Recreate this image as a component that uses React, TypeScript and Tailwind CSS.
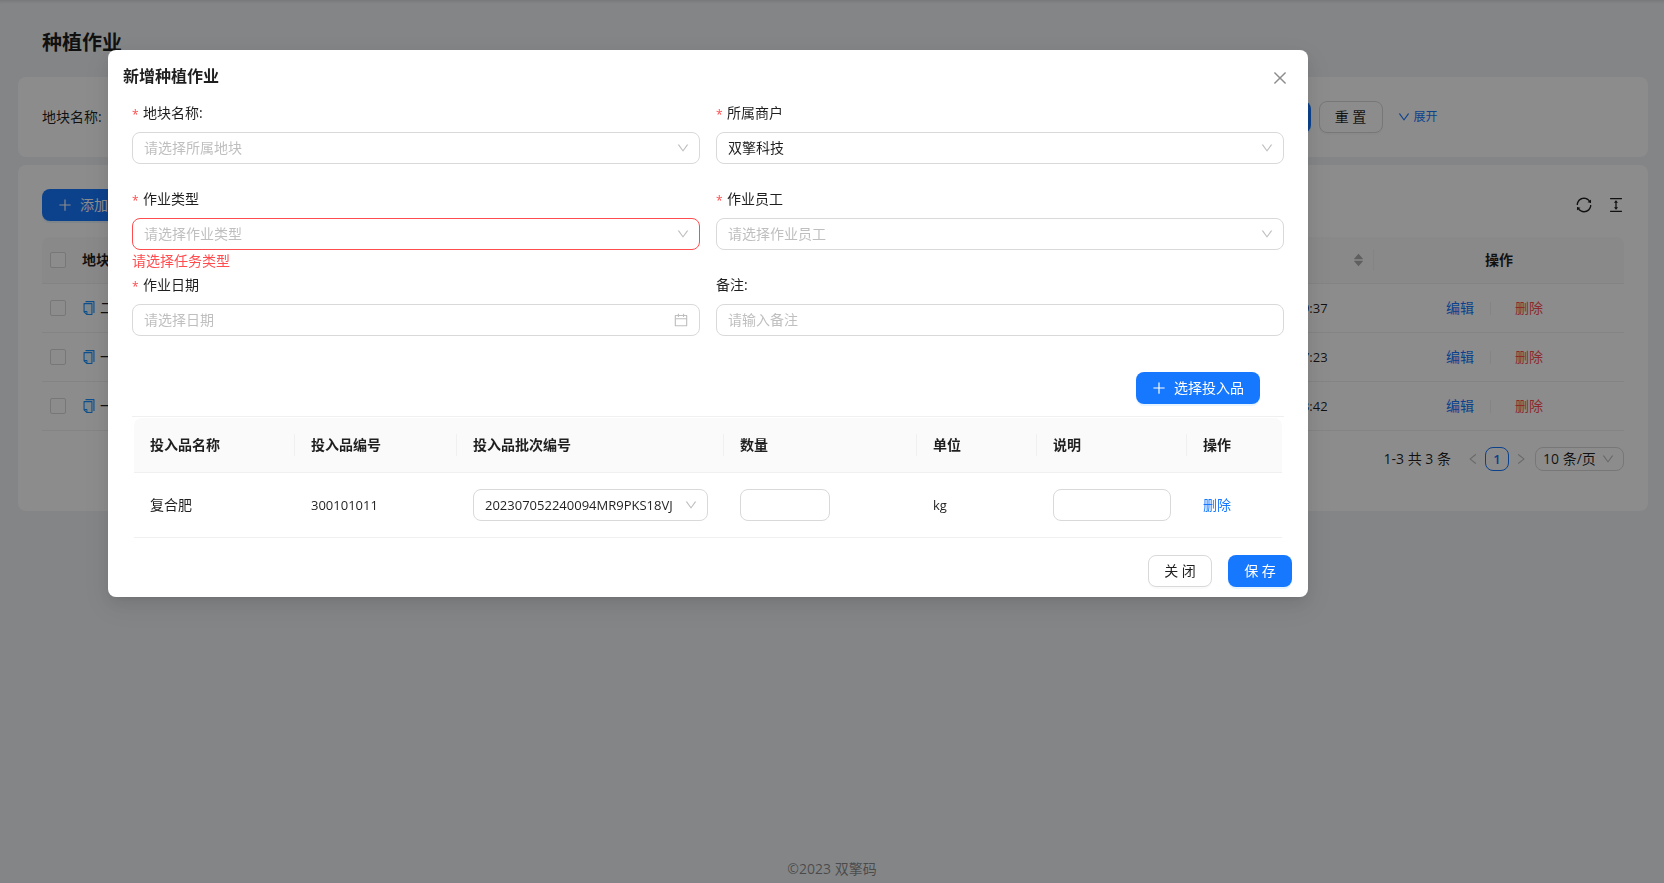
import React from 'react';
import {
  AiFillCaretDown,
  AiFillCaretUp,
  AiOutlineCalendar,
  AiOutlineClose,
  AiOutlineColumnHeight,
  AiOutlineDown,
  AiOutlineLeft,
  AiOutlinePlus,
  AiOutlineRight,
  AiOutlineSync,
} from 'react-icons/ai';
import clsx from 'clsx';

interface PlantingJob {
  id: number;
  plot: string;
  type: string;
  staff: string;
  createdAt: string;
}

const jobs: PlantingJob[] = [
  { id: 1, plot: '二号', type: '施肥', staff: '张三', createdAt: '2023-07-06 10:19:37' },
  { id: 2, plot: '一号', type: '播种', staff: '李四', createdAt: '2023-07-05 22:57:23' },
  { id: 3, plot: '一号', type: '灌溉', staff: '张三', createdAt: '2023-07-05 22:43:42' },
];

const inputClass =
  'h-8 w-full rounded-lg border border-[#d9d9d9] bg-white px-[11px] pb-[2px] text-sm placeholder:text-[#bfbfbf] focus:outline-none';

const primaryButton =
  'inline-flex h-8 items-center justify-center rounded-lg bg-[#1677ff] text-sm text-white shadow-[0_2px_0_rgba(5,145,255,0.1)]';

const defaultButton =
  'inline-flex h-8 w-16 items-center justify-center rounded-lg border border-[#d9d9d9] bg-white text-sm shadow-[0_2px_0_rgba(0,0,0,0.02)]';

const CopyIcon: React.FC = () => (
  <svg viewBox="64 64 896 896" className="h-[14px] w-[14px] shrink-0" aria-hidden="true">
    <path fill="#e6f7ff" d="M232 706h142c22.1 0 40 17.9 40 40v142h250V264H232v442z" />
    <path
      fill="#1890ff"
      d="M832 64H296c-4.4 0-8 3.6-8 8v56c0 4.4 3.6 8 8 8h496v688c0 4.4 3.6 8 8 8h56c4.4 0 8-3.6 8-8V96c0-17.7-14.3-32-32-32z"
    />
    <path
      fill="#1890ff"
      d="M704 192H192c-17.7 0-32 14.3-32 32v530.7c0 8.5 3.4 16.6 9.4 22.6l173.3 173.3c2.2 2.2 4.7 4 7.4 5.5v1.9h4.2c3.5 1.3 7.2 2 11 2H704c17.7 0 32-14.3 32-32V224c0-17.7-14.3-32-32-32zM350 856.2L263.9 770H350v86.2zM664 888H414V746c0-22.1-17.9-40-40-40H232V264h432v624z"
    />
  </svg>
);

interface FieldProps {
  id: string;
  label: string;
  required?: boolean;
  error?: string;
  children: React.ReactNode;
}

const Field: React.FC<FieldProps> = ({ id, label, required, error, children }) => (
  <div className="h-[86px]">
    <label htmlFor={id} className="flex h-8 items-start pt-[2px] text-sm leading-[22px]">
      {required && <span className="mr-1 w-[7px] pt-[2px] text-xs leading-[22px] text-[#ff4d4f]">*</span>}
      {label}
    </label>
    {children}
    {error && <div className="text-sm leading-[22px] text-[#ff4d4f]">{error}</div>}
  </div>
);

interface SelectBoxProps {
  id?: string;
  ariaLabel?: string;
  placeholder?: string;
  options?: string[];
  error?: boolean;
  latin?: boolean;
}

const SelectBox: React.FC<SelectBoxProps> = ({ id, ariaLabel, placeholder, options = [], error, latin }) => (
  <div className="relative">
    <select
      id={id}
      aria-label={ariaLabel}
      className={clsx(
        'h-8 w-full appearance-none rounded-lg border bg-white pl-[11px] pr-[29px] focus:outline-none',
        error ? 'border-[#ff4d4f]' : 'border-[#d9d9d9]',
        latin ? 'text-[13px]' : 'text-sm',
        placeholder && 'text-[#bfbfbf]',
      )}
    >
      {placeholder && <option value="">{placeholder}</option>}
      {options.map((option) => (
        <option key={option}>{option}</option>
      ))}
    </select>
    <AiOutlineDown size={14} className="pointer-events-none absolute right-[10px] top-[9px] text-[#bfbfbf]" />
  </div>
);

const Checkbox: React.FC<{ label: string }> = ({ label }) => (
  <input
    type="checkbox"
    aria-label={label}
    className="block h-4 w-4 appearance-none rounded-xs border border-[#d9d9d9] bg-white"
  />
);

const SearchCard: React.FC = () => (
  <form className="grid grid-cols-4 gap-6 rounded-lg bg-white p-6">
    <div className="flex items-center">
      <label htmlFor="search-plot" className="mr-2 shrink-0 text-sm">
        地块名称:
      </label>
      <input id="search-plot" className={inputClass} placeholder="请输入" />
    </div>
    <div className="flex items-center">
      <label htmlFor="search-type" className="mr-2 shrink-0 text-sm">
        作业类型:
      </label>
      <input id="search-type" className={inputClass} placeholder="请输入" />
    </div>
    <div className="col-start-4 flex items-center">
      <button type="button" className={clsx(primaryButton, 'mr-2 w-16')}>
        查 询
      </button>
      <button type="button" className={clsx(defaultButton, 'mr-[14px]')}>
        重 置
      </button>
      <a href="#" className="flex items-center gap-[3px] text-xs text-[#1677ff]">
        <AiOutlineDown size={14} />
        展开
      </a>
    </div>
  </form>
);

const JobTable: React.FC = () => (
  <section className="mt-2 rounded-lg bg-white p-6">
    <div className="mb-4 flex items-center justify-between">
      <button type="button" className={clsx(primaryButton, 'gap-[7px] px-[15px]')}>
        <AiOutlinePlus size={16} />
        添加
      </button>
      <div className="flex items-center gap-[14px]">
        <button type="button" aria-label="刷新">
          <AiOutlineSync size={18} />
        </button>
        <button type="button" aria-label="密度" className="-mr-px">
          <AiOutlineColumnHeight size={18} />
        </button>
      </div>
    </div>
    <table className="w-full table-fixed border-separate border-spacing-0 text-left text-sm">
      <colgroup>
        <col className="w-8" />
        <col />
        <col />
        <col />
        <col className="w-[176px]" />
        <col className="w-[251px]" />
      </colgroup>
      <thead>
        <tr className="h-[47px] [&>th]:border-b [&>th]:border-[#f0f0f0] [&>th]:bg-[#fafafa] [&>th]:px-2 [&>th]:font-semibold">
          <th className="rounded-tl-lg">
            <Checkbox label="全选" />
          </th>
          <th>地块</th>
          <th>作业类型</th>
          <th>作业员工</th>
          <th>
            <div className="flex items-center justify-between">
              创建时间
              <span className="flex flex-col text-black/30">
                <AiFillCaretUp size={13} className="-mb-[6px]" />
                <AiFillCaretDown size={13} />
              </span>
            </div>
          </th>
          <th className="rounded-tr-lg">
            <div className="-ml-2 h-[22px] border-l border-[#f0f0f0] pl-2 text-center leading-[22px]">操作</div>
          </th>
        </tr>
      </thead>
      <tbody>
        {jobs.map((job) => (
          <tr key={job.id} className="h-[49px] [&>td]:border-b [&>td]:border-[#f0f0f0] [&>td]:px-2">
            <td>
              <Checkbox label={`选择${job.plot}`} />
            </td>
            <td>
              <span className="flex items-center gap-1">
                <CopyIcon />
                {job.plot}
              </span>
            </td>
            <td>{job.type}</td>
            <td>{job.staff}</td>
            <td className="text-[13px]">{job.createdAt}</td>
            <td>
              <div className="flex items-center justify-center pr-2">
                <a href="#" className="text-[#1677ff]">
                  编辑
                </a>
                <span className="ml-4 mr-6 h-[13px] w-px bg-black/6" />
                <a href="#" className="text-[#ff4d4f]">
                  删除
                </a>
              </div>
            </td>
          </tr>
        ))}
      </tbody>
    </table>
    <nav className="my-4 flex h-6 items-center justify-end text-sm" aria-label="分页">
      <span className="mr-[10px]">1-3 共 3 条</span>
      <button type="button" aria-label="上一页" className="flex h-6 w-6 items-center justify-center text-black/25">
        <AiOutlineLeft size={14} />
      </button>
      <button type="button" className="h-6 w-6 rounded-lg border border-[#1677ff] bg-white text-[13px] font-semibold text-[#1677ff]">
        1
      </button>
      <button type="button" aria-label="下一页" className="flex h-6 w-6 items-center justify-center text-black/25">
        <AiOutlineRight size={14} />
      </button>
      <div className="relative ml-[2px]">
        <select
          aria-label="每页条数"
          className="block h-6 w-[89px] appearance-none rounded-lg border border-[#d9d9d9] bg-white pl-[7px] text-sm leading-[22px]"
        >
          <option>10 条/页</option>
          <option>20 条/页</option>
        </select>
        <AiOutlineDown size={14} className="pointer-events-none absolute right-[9px] top-[5px] text-[#bfbfbf]" />
      </div>
    </nav>
  </section>
);

const inputColumns = ['投入品名称', '投入品编号', '投入品批次编号', '数量', '单位', '说明', '操作'];

const InputsTable: React.FC = () => (
  <div className="border-t border-[#f0f0f0] px-[2px] pt-px">
    <table className="w-full table-fixed border-separate border-spacing-0 text-left text-sm">
      <colgroup>
        <col className="w-[161px]" />
        <col className="w-[162px]" />
        <col className="w-[267px]" />
        <col className="w-[193px]" />
        <col className="w-[120px]" />
        <col className="w-[150px]" />
        <col />
      </colgroup>
      <thead>
        <tr className="h-[55px]">
          {inputColumns.map((column) => (
            <th
              key={column}
              className="border-b border-[#f0f0f0] bg-[#fafafa] pl-4 font-semibold first:rounded-tl-lg last:rounded-tr-lg [&:last-child>div]:border-r-0"
            >
              <div className="h-[22px] border-r border-[#f0f0f0] leading-[22px]">{column}</div>
            </th>
          ))}
        </tr>
      </thead>
      <tbody>
        <tr className="h-[65px] [&>td]:border-b [&>td]:border-[#f0f0f0] [&>td]:px-4">
          <td>复合肥</td>
          <td className="text-[13px]">300101011</td>
          <td>
            <SelectBox ariaLabel="投入品批次编号" options={['202307052240094MR9PKS18VJ']} latin />
          </td>
          <td>
            <input aria-label="数量" className={clsx(inputClass, 'block max-w-[90px]')} />
          </td>
          <td className="text-[13px]">kg</td>
          <td>
            <input aria-label="说明" className={clsx(inputClass, 'block')} />
          </td>
          <td>
            <a href="#" className="text-[#1677ff]">
              删除
            </a>
          </td>
        </tr>
      </tbody>
    </table>
  </div>
);

const JobModal: React.FC = () => (
  <div className="fixed inset-0 overflow-auto bg-black/45 pl-[108px] pt-[50px]">
    <div
      role="dialog"
      aria-modal="true"
      aria-labelledby="job-modal-title"
      className="w-full max-w-[1200px] rounded-lg bg-white pb-[10px] shadow-[0_6px_16px_0_rgba(0,0,0,0.08),0_3px_6px_-4px_rgba(0,0,0,0.12),0_9px_28px_8px_rgba(0,0,0,0.05)]"
    >
      <div className="flex h-[50px] items-center justify-between pl-[15px] pr-[19px] pt-[2px]">
        <h2 id="job-modal-title" className="text-base font-semibold">
          新增种植作业
        </h2>
        <button type="button" aria-label="关闭" className="pt-1 text-black/45">
          <AiOutlineClose size={18} />
        </button>
      </div>
      <form className="px-6">
        <div className="grid grid-cols-2 gap-x-4">
          <Field id="plot" label="地块名称:" required>
            <SelectBox id="plot" placeholder="请选择所属地块" />
          </Field>
          <Field id="merchant" label="所属商户" required>
            <SelectBox id="merchant" options={['双擎科技']} />
          </Field>
          <Field id="job-type" label="作业类型" required error="请选择任务类型">
            <SelectBox id="job-type" placeholder="请选择作业类型" error />
          </Field>
          <Field id="staff" label="作业员工" required>
            <SelectBox id="staff" placeholder="请选择作业员工" />
          </Field>
          <Field id="job-date" label="作业日期" required>
            <div className="relative">
              <input id="job-date" className={inputClass} placeholder="请选择日期" />
              <AiOutlineCalendar size={16} className="pointer-events-none absolute right-[11px] top-2 text-[#bfbfbf]" />
            </div>
          </Field>
          <Field id="remark" label="备注:">
            <input id="remark" className={inputClass} placeholder="请输入备注" />
          </Field>
        </div>
        <div className="flex justify-end pb-3 pr-6 pt-[14px]">
          <button type="button" className={clsx(primaryButton, 'gap-[7px] pl-[15px] pr-4')}>
            <AiOutlinePlus size={16} />
            选择投入品
          </button>
        </div>
        <InputsTable />
      </form>
      <div className="mt-[17px] flex justify-end gap-4 pr-4">
        <button type="button" className={defaultButton}>
          关 闭
        </button>
        <button type="button" className={clsx(primaryButton, 'w-16')}>
          保 存
        </button>
      </div>
    </div>
  </div>
);

export default function App() {
  return (
    <div className="flex min-h-screen flex-col bg-[#f0f2f5] font-['Open_Sans','Noto_Sans_CJK_SC',sans-serif] text-black/88 shadow-[inset_0_4px_4px_-4px_rgba(0,0,0,0.2)]">
      <main className="pl-[18px] pr-4">
        <h1 className="pb-[19px] pl-6 pt-7 text-xl font-semibold leading-[30px]">种植作业</h1>
        <SearchCard />
        <JobTable />
      </main>
      <footer className="mt-auto pb-[3px] text-center text-sm leading-[22px] text-black/45">©2023 双擎码</footer>
      <JobModal />
    </div>
  );
}
